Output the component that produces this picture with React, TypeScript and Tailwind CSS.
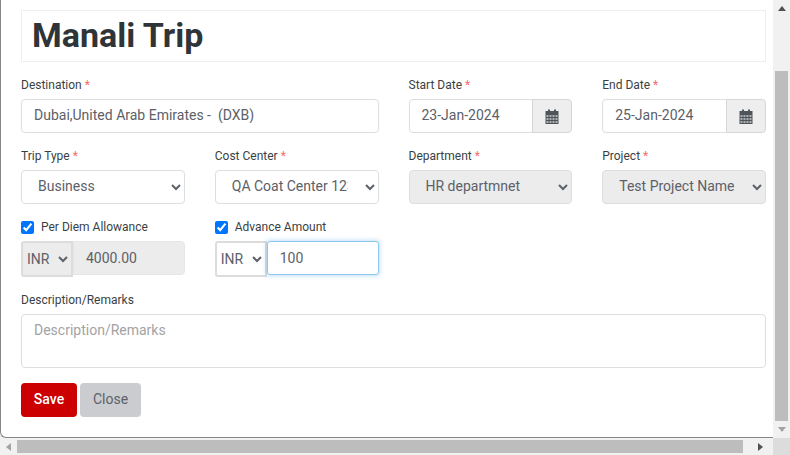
import React from "react";

const Req = () => <span className="text-[#f86c6b]"> *</span>;

const labelCls = "block h-[18px] text-[12px] leading-[18px] text-[#3a3f44] mb-[5px]";
const inputCls =
  "block w-full h-[34px] border border-[#dcdfe2] rounded-[4px] px-3 pb-[2px] text-[14px] text-[#5c6169] bg-white outline-none";
const selectCls =
  "block w-full h-[34px] border border-[#dcdfe2] rounded-[4px] pl-3 pr-[14px] pb-[2px] text-[14px] text-[#5c6169] outline-none";

function CalendarIcon() {
  return (
    <svg width="14" height="15" viewBox="0 0 14 15" className="block">
      <rect x="0.5" y="2" width="13" height="13" fill="#4f5459" />
      <rect x="3" y="0.5" width="2" height="3" fill="#4f5459" />
      <rect x="9" y="0.5" width="2" height="3" fill="#4f5459" />
      {[6, 9, 12].map((y) =>
        [1.5, 4.5, 7.5, 10.5].map((x) => (
          <rect key={`${x}-${y}`} x={x} y={y} width="2" height="2" fill="#aeb2b6" />
        ))
      )}
    </svg>
  );
}

function DateField({ label, value }: { label: string; value: string }) {
  return (
    <div>
      <label className={labelCls}>
        {label}
        <Req />
      </label>
      <div className="flex h-[34px]">
        <input
          readOnly
          value={value}
          className="min-w-0 flex-1 h-[34px] border border-[#dcdfe2] rounded-l-[4px] px-3 pb-[2px] text-[14px] text-[#5c6169] bg-white outline-none"
        />
        <div className="w-[40px] h-[34px] shrink-0 -ml-px flex items-center justify-center border border-[#d4d7da] rounded-r-[4px] bg-[#eeeeee]">
          <CalendarIcon />
        </div>
      </div>
    </div>
  );
}

function SelectField({
  label,
  value,
  disabled,
}: {
  label: string;
  value: string;
  disabled?: boolean;
}) {
  return (
    <div>
      <label className={labelCls}>
        {label}
        <Req />
      </label>
      <select
        disabled={disabled}
        defaultValue={value}
        className={`${selectCls} ${disabled ? "bg-[#ececec] opacity-100" : "bg-white"}`}
      >
        <option>{value}</option>
      </select>
    </div>
  );
}

function Arrow({ points, fill, w, h }: { points: string; fill: string; w: number; h: number }) {
  return (
    <svg width={w} height={h} viewBox={`0 0 ${w} ${h}`} className="block">
      <polygon points={points} fill={fill} />
    </svg>
  );
}

export default function App() {
  return (
    <div
      className="w-[790px] h-[455px] flex flex-col overflow-hidden bg-[#f1f1f1]"
      style={{ fontFamily: "Roboto, sans-serif" }}
    >
      <div className="flex h-[438px]">
        <div className="w-[773px] h-[438px] bg-white border-l border-b border-[#868686] rounded-bl-[6px] pl-5 pr-[7px] pt-[10px]">
          <div className="h-[52px] border border-[#eeeeee] pl-[10px] pb-[2px] flex items-center">
            <h1 className="text-[34px] leading-[40px] font-bold text-[#2f3438] m-0">Manali Trip</h1>
          </div>

          <div className="grid grid-cols-4 gap-x-[30px] mt-[14px]">
            <div className="col-span-2">
              <label className={labelCls}>
                Destination
                <Req />
              </label>
              <input readOnly value="Dubai,United Arab Emirates -  (DXB)" className={inputCls} />
            </div>
            <DateField label="Start Date" value="23-Jan-2024" />
            <DateField label="End Date" value="25-Jan-2024" />
          </div>

          <div className="grid grid-cols-4 gap-x-[30px] mt-[14px]">
            <SelectField label="Trip Type" value="Business" />
            <SelectField label="Cost Center" value="QA Coat Center 123" />
            <SelectField label="Department" value="HR departmnet" disabled />
            <SelectField label="Project" value="Test Project Name" disabled />
          </div>

          <div className="grid grid-cols-4 gap-x-[30px] mt-[14px]">
            <div>
              <label className="flex items-center h-[18px] mb-[5px] text-[12px] text-[#3a3f44]">
                <input type="checkbox" defaultChecked className="w-[13px] h-[13px] m-0 mr-[7px] accent-[#0075ff]" />
                Per Diem Allowance
              </label>
              <div className="flex items-start h-[36px]">
                <select
                  disabled
                  defaultValue="INR"
                  className="w-[52px] h-[36px] shrink-0 border-2 border-[#dcdcdc] rounded-l-[3px] p-0 text-[14px] text-[#5c6169] bg-[#ececec] opacity-100 outline-none"
                >
                  <option>INR</option>
                </select>
                <input
                  readOnly
                  disabled
                  value="4000.00"
                  className="min-w-0 flex-1 h-[34px] border border-[#e6e6e6] rounded-r-[4px] px-3 text-[14px] text-[#5c6169] bg-[#ececec] outline-none"
                />
              </div>
            </div>
            <div>
              <label className="flex items-center h-[18px] mb-[5px] text-[12px] text-[#3a3f44]">
                <input type="checkbox" defaultChecked className="w-[13px] h-[13px] m-0 mr-[7px] accent-[#0075ff]" />
                Advance Amount
              </label>
              <div className="flex items-start h-[36px]">
                <select
                  defaultValue="INR"
                  className="w-[52px] h-[36px] shrink-0 border-2 border-[#dcdcdc] rounded-l-[3px] p-0 text-[14px] text-[#5c6169] bg-white outline-none"
                >
                  <option>INR</option>
                </select>
                <input
                  readOnly
                  value="100"
                  className="min-w-0 flex-1 h-[34px] border border-[#8cc8f0] rounded-[3px] px-3 text-[14px] text-[#5c6169] bg-white outline-none shadow-[0_0_4px_1px_rgba(60,150,230,0.3)]"
                />
              </div>
            </div>
          </div>

          <div className="mt-[14px]">
            <label className={labelCls}>Description/Remarks</label>
            <textarea
              placeholder="Description/Remarks"
              className="block w-full h-[54px] resize-none border border-[#dcdfe2] rounded-[4px] px-3 py-[5px] text-[14px] leading-[21px] text-[#5c6169] placeholder:text-[#a3a3a3] bg-white outline-none"
            />
          </div>

          <div className="flex gap-[3px] mt-[15px]">
            <button className="w-[56px] h-[34px] pb-[2px] rounded-[4px] bg-[#cc0000] text-white text-[14px] font-medium">
              Save
            </button>
            <button className="w-[61px] h-[34px] pb-[2px] rounded-[4px] bg-[#cbccd0] text-[#5c6169] text-[14px]">
              Close
            </button>
          </div>
        </div>

        <div className="w-[17px] h-[438px] bg-[#f1f1f1] flex flex-col items-center">
          <div className="h-[17px] flex items-center justify-center">
            <Arrow w={8} h={5} points="4,0 8,5 0,5" fill="#505050" />
          </div>
          <div className="w-[13px] h-[350px] mt-[54px] bg-[#bdbdbd]" />
          <div className="h-[17px] flex items-center justify-center">
            <Arrow w={8} h={5} points="0,0 8,0 4,5" fill="#a3a3a3" />
          </div>
        </div>
      </div>

      <div className="flex h-[17px]">
        <div className="w-[773px] h-[17px] flex items-center bg-[#f1f1f1]">
          <div className="w-[17px] flex items-center justify-center">
            <Arrow w={5} h={8} points="5,0 5,8 0,4" fill="#a3a3a3" />
          </div>
          <div className="w-[726px] h-[13px] bg-[#bdbdbd]" />
          <div className="w-[30px] flex items-center justify-center pl-[5px]">
            <Arrow w={5} h={8} points="0,0 5,4 0,8" fill="#505050" />
          </div>
        </div>
        <div className="w-[17px] h-[17px] bg-[#dcdcdc]" />
      </div>
    </div>
  );
}
